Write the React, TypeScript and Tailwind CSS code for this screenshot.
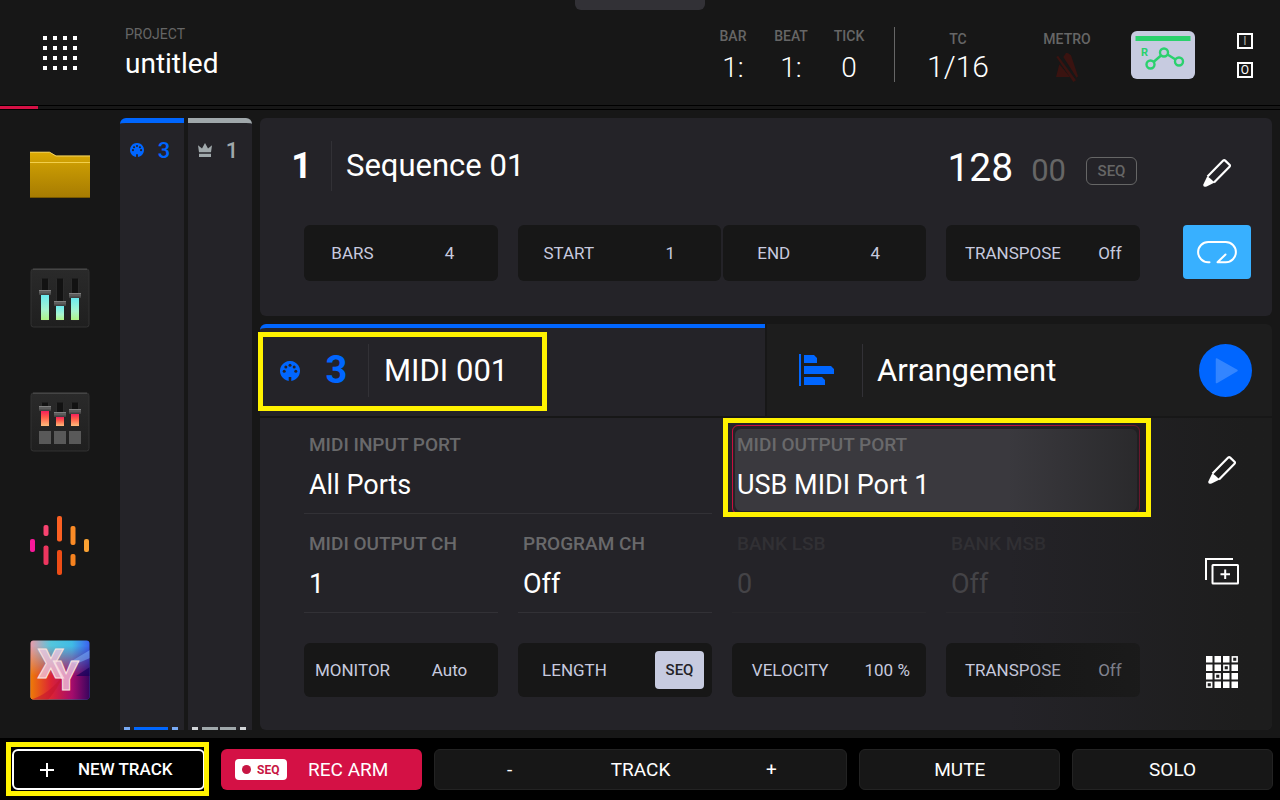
import type { ReactNode } from 'react';

const PencilIcon = () => (
    <svg width="28" height="28" viewBox="0 0 28 28" fill="none">
        <path d="M4.5 17.5 20.2 1.6q1-.9 2 0l4.3 4.1q1 1 0 2L11 23.4" stroke="white" strokeWidth="2.2" />
        <path d="M4.3 17.2 7.3 19.4 11.6 23.6 3.6 27.4Q0 28.8.2 25.8Z" fill="white" />
    </svg>
);

const MidiIcon = ({ className }: { className: string }) => (
    <svg className={className} viewBox="0 0 20 20">
        <path d="M8.7 19.9A10 10 0 1 1 11.3 19.9V16H8.7Z" fill="#0066ff" />
        <g fill="#242328">
            <circle cx="4.2" cy="10.2" r="1.5" />
            <circle cx="5.8" cy="6" r="1.5" />
            <circle cx="10" cy="4.3" r="1.5" />
            <circle cx="14.2" cy="6" r="1.5" />
            <circle cx="15.8" cy="10.2" r="1.5" />
        </g>
    </svg>
);

const CrownIcon = () => (
    <svg width="14" height="14" viewBox="0 0 14 14" fill="#a0a8ab">
        <path d="M0 2.2 4 5.5 7 0 10 5.5 14 2.2 13 9.3H1ZM1 10.8H13V14H1Z" />
    </svg>
);

const FolderIcon = () => (
    <svg width="60" height="50" viewBox="0 -2 60 50">
        <defs>
            <linearGradient id="folder" x1="0" y1="0" x2="0" y2="1">
                <stop offset="0" stopColor="#deac04" />
                <stop offset=".3" stopColor="#c79903" />
                <stop offset="1" stopColor="#a67b02" />
            </linearGradient>
        </defs>
        <path d="M0 1H19.5L26 4.8H60V47H0Z" fill="url(#folder)" />
        <path d="M0 1.2H19.5L26 5H60" fill="none" stroke="#f0d264" />
        <path d="M0 11.5H60" stroke="#f2cf4c" />
        <path d="M0 46.5H60" stroke="#785801" />
    </svg>
);

const Fader = ({ x, top, knob, bottom, fill }: { x: number; top: number; knob: number; bottom: number; fill: string }) => (
    <g>
        <rect x={x - 3.5} y={top} width="7" height={bottom - top} rx="1" fill="#121212" stroke="#2b2b2b" />
        <rect x={x - 4} y={knob + 3} width="8" height={bottom - knob - 3} fill={fill} />
        <rect x={x - 6} y={knob - 2} width="12" height="5" rx=".7" fill="#5c5c5c" />
        <rect x={x - 6} y={knob - 2} width="12" height="1" fill="#808080" />
        <rect x={x - 6} y={knob + 1.5} width="12" height="1.5" fill="#414141" />
    </g>
);

const MixerIcon = () => (
    <svg width="60" height="60" viewBox="0 0 60 60">
        <defs>
            <linearGradient id="meter" x1="0" y1="0" x2="0" y2="1">
                <stop offset="0" stopColor="#6beaf0" />
                <stop offset=".6" stopColor="#a8f5cf" />
                <stop offset="1" stopColor="#aef486" />
            </linearGradient>
            <linearGradient id="box" x1="0" y1="0" x2="0" y2="1">
                <stop offset="0" stopColor="#2a2a2a" />
                <stop offset="1" stopColor="#1f1f1f" />
            </linearGradient>
        </defs>
        <rect x="1" y="1" width="58" height="58" rx="2.5" fill="url(#box)" stroke="#333333" />
        <path d="M3 1.2H57" stroke="#505050" />
        <Fader x={15} top={10} knob={24} bottom={52} fill="url(#meter)" />
        <Fader x={30} top={10} knob={35} bottom={52} fill="url(#meter)" />
        <Fader x={45} top={10} knob={27} bottom={52} fill="url(#meter)" />
    </svg>
);

const PadMixerIcon = () => (
    <svg width="60" height="60" viewBox="0 0 60 60">
        <defs>
            <linearGradient id="heat" x1="0" y1="0" x2="0" y2="1">
                <stop offset="0" stopColor="#f51f5c" />
                <stop offset=".4" stopColor="#ff5a48" />
                <stop offset="1" stopColor="#ffbd7c" />
            </linearGradient>
        </defs>
        <rect x="1" y="1" width="58" height="58" rx="2.5" fill="url(#box)" stroke="#333333" />
        <path d="M3 1.2H57" stroke="#505050" />
        <Fader x={15} top={10} knob={16} bottom={34} fill="url(#heat)" />
        <Fader x={30} top={10} knob={22} bottom={34} fill="url(#heat)" />
        <Fader x={45} top={10} knob={19} bottom={34} fill="url(#heat)" />
        <g fill="#595959">
            <rect x="9" y="39" width="12" height="13" />
            <rect x="24" y="39" width="12" height="13" />
            <rect x="39" y="39" width="12" height="13" />
        </g>
    </svg>
);

const WaveIcon = () => (
    <svg width="60" height="60" viewBox="0 0 60 60">
        <rect x="0" y="23" width="5" height="13" rx="2" fill="#f9189a" />
        <rect x="13.5" y="9" width="5" height="11" rx="2" fill="#f84370" />
        <rect x="13.5" y="29.5" width="5" height="19.5" rx="2" fill="#ee365f" />
        <rect x="27" y="0" width="5" height="25.5" rx="2" fill="#fb6022" />
        <rect x="27" y="34" width="5" height="25" rx="2" fill="#ee4d16" />
        <rect x="40.5" y="10" width="5" height="19" rx="2" fill="#fb8b26" />
        <rect x="40.5" y="38" width="5" height="12" rx="2" fill="#f6821f" />
        <rect x="54" y="23" width="5" height="13" rx="2" fill="#fba233" />
    </svg>
);

const XYIcon = () => (
    <svg width="60" height="60" viewBox="0 0 60 60">
        <defs>
            <linearGradient id="xyTop" x1="0" y1="0" x2="1" y2="0">
                <stop offset="0" stopColor="#ec9aa8" />
                <stop offset=".35" stopColor="#54c6dd" />
                <stop offset=".7" stopColor="#40bbe5" />
                <stop offset="1" stopColor="#3b5ff0" />
            </linearGradient>
            <linearGradient id="xyBottom" x1="0" y1="0" x2="1" y2="0">
                <stop offset="0" stopColor="#ee7d06" />
                <stop offset=".35" stopColor="#dc2334" />
                <stop offset=".7" stopColor="#a50c6c" />
                <stop offset="1" stopColor="#35045e" />
            </linearGradient>
            <linearGradient id="xyFade" x1="0" y1="0" x2="0" y2="1">
                <stop offset=".1" stopColor="white" stopOpacity="0" />
                <stop offset=".6" stopColor="white" />
            </linearGradient>
            <mask id="xyMask"><rect width="60" height="60" fill="url(#xyFade)" /></mask>
            <clipPath id="xyClip"><rect x=".5" y=".5" width="59" height="59" rx="3" /></clipPath>
        </defs>
        <g clipPath="url(#xyClip)">
            <rect width="60" height="60" fill="url(#xyTop)" />
            <rect width="60" height="60" fill="url(#xyBottom)" mask="url(#xyMask)" />
            <path d="M0 60Q20 54 34 34 28 48 18 60Z" fill="#c4152e" opacity=".6" />
            <path d="M40 22 60 10V18L46 24Z" fill="#7db9ff" opacity=".5" />
            <path d="M46 36 60 27V36Z" fill="#16005a" opacity=".7" />
        </g>
        <text x="8" y="38" fontFamily="Roboto, sans-serif" fontWeight="900" fontSize="40" fill="#f3cce4" fillOpacity=".75" stroke="#fbe6e0" strokeWidth="1">
            X<tspan dx="-10" dy="12">Y</tspan>
        </text>
    </svg>
);

const LoopIcon = () => (
    <svg width="40" height="24" viewBox="0 0 40 24" fill="none" stroke="white" strokeWidth="2" strokeLinecap="round" strokeLinejoin="round">
        <path d="M12.5 22.2H11.2A10.1 10.1 0 0 1 11.2 2H28.8A10.1 10.1 0 0 1 28.8 22.2H20.5L28.5 14.5" />
    </svg>
);

const ArrangeIcon = () => (
    <svg width="36" height="32" viewBox="0 0 36 32" fill="#0066ff">
        <path d="M0 0H2V32H0ZM5 1H15L18 4V9H5ZM5 12H32L35 15V20H5ZM5 23H23L26 26V31H5Z" />
    </svg>
);

const DuplicateIcon = () => (
    <svg width="34" height="27" viewBox="0 0 34 27" fill="none" stroke="white" strokeWidth="2">
        <path d="M1 22V1H28" />
        <rect x="7.5" y="7" width="25.5" height="18.5" rx=".5" />
        <path d="M20.2 11.5V21M15.5 16.2H25" />
    </svg>
);

const PadGridIcon = () => (
    <svg width="32" height="32" viewBox="0 0 32 32">
        {[0, 1, 2, 3].map(row => [0, 1, 2, 3].map(col => (
            row + col === 3
                ? <rect key={`${row}${col}`} x={col * 8.5 + 0.9} y={row * 8.5 + 0.9} width="4.7" height="4.7" fill="none" stroke="white" strokeWidth="1.6" />
                : <rect key={`${row}${col}`} x={col * 8.5} y={row * 8.5} width="6.5" height="6.5" fill="white" />
        )))}
    </svg>
);

const MetroIcon = () => (
    <svg width="22" height="29" viewBox="0 0 66 87" fill="#3a1310">
        <path d="M0 72 10 34 42 72ZM22 12 30 0H35L45 7 66 70 62 74Z" />
        <path d="M1 12 6 8 60 82 52 87Z" />
    </svg>
);

const Highlight = ({ className }: { className: string }) => (
    <div className={`pointer-events-none absolute z-20 border-5 border-[#fff200] ${className}`} />
);

const Counter = ({ label, value }: { label: string; value: string }) => (
    <div className="w-[58px] pt-7 text-center">
        <p className="text-sm/4 font-medium text-[#666666]">{label}</p>
        <p className="mt-1.5 text-[28px]/9 font-light">{value}</p>
    </div>
);

type ParamProps = { label: string; value: string; labelWidth?: string };

const Param = ({ label, value, labelWidth = 'w-1/2' }: ParamProps) => (
    <button className="flex w-full items-center rounded-md bg-[#171717] pt-0.5 text-[17px] text-[#c7cadf]">
        <span className={`shrink-0 text-center ${labelWidth}`}>{label}</span>
        <span className="flex-1 text-center whitespace-nowrap">{value}</span>
    </button>
);

type FieldProps = { label: string; value: string; disabled?: boolean; className?: string };

const Field = ({ label, value, disabled, className = '' }: FieldProps) => (
    <button
        disabled={disabled}
        className={`border-b pb-2 pl-[5px] text-left ${disabled ? 'border-[#28272b]' : 'border-[#323136]'} ${className}`}
    >
        <span className={`block text-[19px]/6 font-medium ${disabled ? 'text-[#313034]' : 'text-[#69696b]'}`}>{label}</span>
        <span className={`mt-2 block text-[27px]/10 ${disabled ? 'text-[#444347]' : 'text-white'}`}>{value}</span>
    </button>
);

type TrackProps = { icon: ReactNode; number: string; top: string; color: string; children: ReactNode };

const TrackColumn = ({ icon, number, top, color, children }: TrackProps) => (
    <div className={`flex w-16 flex-col border-t-5 bg-[#242328] ${top}`}>
        <div className={`flex h-[53px] items-center pl-2.5 ${color}`}>
            {icon}
            <span className="ml-1 w-8 pt-0.5 text-center text-[22px] font-medium">{number}</span>
        </div>
        <div className="mt-auto flex h-[3px] px-1">{children}</div>
    </div>
);

const navItems = [
    { name: 'Browser', icon: <FolderIcon /> },
    { name: 'Channel mixer', icon: <MixerIcon /> },
    { name: 'Pad mixer', icon: <PadMixerIcon /> },
    { name: 'Sample edit', icon: <WaveIcon /> },
    { name: 'XY pad', icon: <XYIcon /> },
];

const Header = () => (
    <header className="relative flex h-[105px]">
        <div className="absolute top-0 left-1/2 h-2.5 w-[130px] -translate-x-1/2 rounded-b-md bg-[#323136]" />
        <button aria-label="Menu" className="flex w-[120px] items-center justify-center">
            <span className="grid grid-cols-4 gap-1.5">
                {Array.from({ length: 16 }, (_, i) => <span key={i} className="size-1 bg-white" />)}
            </span>
        </button>
        <div className="pt-[26px] pl-[5px]">
            <p className="text-sm/4 text-[#666666]">PROJECT</p>
            <h1 className="mt-1 text-[28px]/9">untitled</h1>
        </div>
        <div className="ml-auto flex">
            <Counter label="BAR" value="1:" />
            <Counter label="BEAT" value="1:" />
            <Counter label="TICK" value="0" />
            <div className="mt-[27px] ml-4 h-[55px] w-px bg-[#666666]" />
            <div className="w-[126px] pt-[31px] text-center">
                <p className="text-sm/4 font-medium text-[#666666]">TC</p>
                <p className="mt-0.5 text-[30px]/9 font-light">1/16</p>
            </div>
            <button aria-label="Metronome off" className="flex w-[92px] flex-col items-center pt-[31px]">
                <span className="text-sm/4 font-medium text-[#666666]">METRO</span>
                <span className="mt-1.5"><MetroIcon /></span>
            </button>
            <button aria-label="Read automation" className="mt-[31px] ml-[18px] h-12 w-16 rounded-md bg-[#c7cbe0]">
                <svg width="64" height="48" viewBox="0 0 64 48" fill="none" stroke="#2bd16d" strokeWidth="2.4">
                    <path d="M4.5 7.5H59.5" strokeWidth="5" />
                    <text x="10" y="25" fontSize="11" fontWeight="bold" fill="#2bd16d" stroke="none">R</text>
                    <path d="M22.5 31 30 24.5M36.5 23.5 44.5 28.5" />
                    <circle cx="19.5" cy="33.5" r="4" />
                    <circle cx="33" cy="21.5" r="4" />
                    <circle cx="48" cy="30.5" r="4" />
                </svg>
            </button>
            <div className="mt-[33px] mr-[27px] ml-[42px] flex flex-col gap-[13px]">
                <button className="size-4 border-2 border-white text-center text-xs/3 text-[#aaaaaa]">I</button>
                <button className="size-4 border-2 border-white text-center text-xs/3">O</button>
            </div>
        </div>
    </header>
);

const SequencePanel = () => (
    <section className="rounded-md bg-[#242328] pt-[23px] pb-[35px]">
        <div className="flex h-[50px]">
            <div className="flex w-[72px] items-center justify-center border-r border-[#323136] pl-3 text-4xl font-bold">1</div>
            <h2 className="flex-1 pl-3.5 text-[31px]/[50px]">Sequence 01</h2>
            <div className="flex items-baseline pt-1">
                <span className="text-[39px]/[46px]">128</span>
                <span className="ml-[18px] text-[31px]/[46px] text-[#666666]">00</span>
            </div>
            <button className="mt-4 mr-[3px] ml-5 h-7 w-[51px] rounded-md border border-[#666666] text-[15px] font-medium text-[#666666]">SEQ</button>
            <button aria-label="Edit sequence" className="flex w-[132px] items-center justify-center pt-3.5 pl-[22px]"><PencilIcon /></button>
        </div>
        <div className="mt-[34px] flex">
            <div className="grid h-14 flex-1 grid-cols-4 gap-5 pl-11">
                <Param label="BARS" value="4" />
                <div className="col-span-2 flex gap-0.5">
                    <Param label="START" value="1" />
                    <Param label="END" value="4" />
                </div>
                <Param label="TRANSPOSE" value="Off" labelWidth="w-[69%]" />
            </div>
            <div className="flex w-[132px] justify-center pl-[22px]">
                <button aria-label="Loop" className="flex h-[54px] w-[68px] items-center justify-center rounded bg-[#38b0ff]"><LoopIcon /></button>
            </div>
        </div>
    </section>
);

const TrackTabs = () => (
    <div className="mt-2 grid h-[92px] grid-cols-2 gap-0.5">
        <div className="relative flex items-start rounded-tl-md border-t-4 border-[#0066ff] bg-[#242328] pt-4">
            <button className="flex h-[53px] w-full items-center text-left">
                <MidiIcon className="ml-5 size-5" />
                <span className="ml-3.5 w-[45px] text-center text-[38px] font-bold text-[#0066ff]">3</span>
                <span className="ml-[9px] border-l border-[#323136] pl-[15px] text-[31px]/[53px]">MIDI 001</span>
            </button>
            <Highlight className="top-1 -left-0.5 h-[79px] w-[289px]" />
        </div>
        <div className="flex items-center rounded-tr-md bg-[#1d1d1d] pr-5">
            <button className="flex h-[53px] flex-1 items-center pl-8 text-left">
                <ArrangeIcon />
                <span className="ml-[27px] border-l border-[#323136] pl-3.5 text-[31px]/[53px]">Arrangement</span>
            </button>
            <button aria-label="Play" className="rounded-full bg-[#0066ff]">
                <svg width="53" height="53" viewBox="0 0 53 53">
                    <path d="M17.5 15 38 26.5 17.5 38.5Z" fill="#3385ff" stroke="#3385ff" strokeLinejoin="round" strokeWidth="1.5" />
                </svg>
            </button>
        </div>
    </div>
);

const TrackSettings = () => (
    <section className="relative mt-0.5 flex flex-1 rounded-b-md bg-[#242328]">
        <div className="flex-1 pb-[33px] pl-11">
            <div className="grid grid-cols-4 gap-x-5">
                <Field label="MIDI INPUT PORT" value="All Ports" className="col-span-2 pt-[15px]" />
                <div className="relative col-span-2 grid">
                    <div className="absolute inset-x-0 top-[7px] bottom-0 rounded-md border border-[#c9103f]" />
                    <div className="absolute inset-x-[3px] top-[11px] bottom-[3px] rounded-md bg-[#3a393e]" />
                    <Field label="MIDI OUTPUT PORT" value="USB MIDI Port 1" className="relative pt-[15px]" />
                    <Highlight className="top-0 -right-[11px] -bottom-[3px] -left-[9px]" />
                </div>
                <Field label="MIDI OUTPUT CH" value="1" className="pt-[18px]" />
                <Field label="PROGRAM CH" value="Off" className="pt-[18px]" />
                <Field label="BANK LSB" value="0" className="pt-[18px]" disabled />
                <Field label="BANK MSB" value="Off" className="pt-[18px]" disabled />
            </div>
            <div className="mt-[30px] grid h-[54px] grid-cols-4 gap-5">
                <Param label="MONITOR" value="Auto" />
                <div className="flex items-center rounded-md bg-[#171717] pr-2 text-[17px] text-[#c7cadf]">
                    <span className="flex-1 pt-0.5 pr-6 text-center">LENGTH</span>
                    <button className="h-[38px] w-[49px] rounded bg-[#c7cbe0] text-[15px] font-medium text-[#242328]">SEQ</button>
                </div>
                <Param label="VELOCITY" value="100 %" labelWidth="w-3/5" />
                <Param label="TRANSPOSE" value="Off" labelWidth="w-[69%]" />
            </div>
        </div>
        <div className="pointer-events-none absolute inset-y-0 right-0 z-10 w-[264px] rounded-br-md bg-linear-to-r from-[#1d1d1d]/0 to-[#1d1d1d] to-90%" />
        <div className="relative z-10 flex w-[132px] flex-col items-center pt-0.5 pb-2 pl-8">
            <button aria-label="Edit track" className="flex flex-1 items-center"><PencilIcon /></button>
            <button aria-label="Duplicate track" className="flex flex-1 items-center"><DuplicateIcon /></button>
            <button aria-label="Pads" className="flex flex-1 items-center"><PadGridIcon /></button>
        </div>
    </section>
);

const Footer = () => (
    <footer className="grid h-[62px] grid-cols-6 gap-3 bg-black pt-[11px] pr-[7px] pb-2.5 pl-2 text-[19px]">
        <div className="relative grid px-1">
            <button className="flex items-center rounded-md border-2 border-white bg-black pl-[26px] text-[17px] font-medium">
                <svg width="14" height="14" viewBox="0 0 14 14" stroke="white" strokeWidth="2"><path d="M7 0V14M0 7H14" /></svg>
                <span className="ml-6 whitespace-nowrap">NEW TRACK</span>
            </button>
            <Highlight className="right-0 -left-0.5 -top-[7px] -bottom-1.5" />
        </div>
        <button className="flex items-center rounded-md bg-[#d41145] pl-3.5">
            <span className="flex h-[21px] w-[52px] items-center justify-center gap-1.5 rounded bg-white text-xs font-bold text-[#c71543]">
                <span className="size-[9px] rounded-full bg-[#c71543]" />
                SEQ
            </span>
            <span className="flex-1 pt-0.5 pr-3 text-center">REC ARM</span>
        </button>
        <div className="col-span-2 grid grid-cols-[150px_1fr_150px] items-center rounded-md border border-[#232323] bg-[#171717] pt-0.5 text-center">
            <button aria-label="Previous track">-</button>
            <span>TRACK</span>
            <button aria-label="Next track">+</button>
        </div>
        <button className="rounded-md border border-[#232323] bg-[#171717] pt-0.5">MUTE</button>
        <button className="rounded-md border border-[#232323] bg-[#171717] pt-0.5">SOLO</button>
    </footer>
);

export default function App() {
    return (
        <div className="flex min-h-screen flex-col bg-[#171717] font-[Roboto,sans-serif] text-white">
            <Header />
            <div className="h-[5px] border-y border-black">
                <div className="h-[3px] w-[38px] bg-[#d41145]" />
            </div>
            <main className="flex flex-1">
                <nav className="flex w-[120px] flex-col pt-0.5 pb-1.5">
                    {navItems.map(item => (
                        <button key={item.name} aria-label={item.name} className="flex flex-1 items-center justify-center">{item.icon}</button>
                    ))}
                </nav>
                <div className="flex gap-1 pt-2 pb-2">
                    <TrackColumn icon={<MidiIcon className="size-3.5" />} number="3" top="rounded-tl-md border-[#0066ff]" color="text-[#0066ff]">
                        <span className="w-1.5 bg-[#78aaf5]" />
                        <span className="mx-1 flex-1 bg-[#0066ff]" />
                        <span className="mr-0.5 w-1.5 bg-[#78aaf5]" />
                    </TrackColumn>
                    <TrackColumn icon={<CrownIcon />} number="1" top="rounded-tr-md border-[#a0a8ab]" color="text-[#a0a8ab]">
                        <span className="w-1.5 bg-[#d2d5d8]" />
                        <span className="ml-1 flex-1 bg-[#a0a8ab]" />
                        <span className="mr-1 ml-0.5 flex-1 bg-[#a0a8ab]" />
                        <span className="mr-0.5 w-1.5 bg-[#d2d5d8]" />
                    </TrackColumn>
                </div>
                <div className="flex min-w-0 flex-1 flex-col p-2">
                    <SequencePanel />
                    <TrackTabs />
                    <TrackSettings />
                </div>
            </main>
            <Footer />
        </div>
    );
}
